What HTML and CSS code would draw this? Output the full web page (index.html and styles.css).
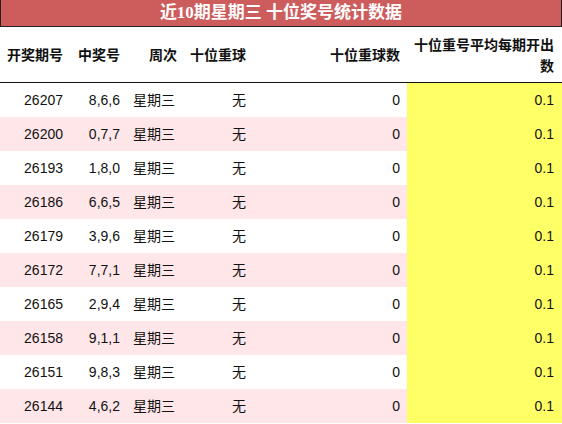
FILE: index.html
```html
<!DOCTYPE html>
<html lang="zh">
<head>
<meta charset="utf-8">
<link rel="stylesheet" href="styles.css">
</head>
<body>
<div class="title">近10期星期三 十位奖号统计数据</div>
<table class="stats">
  <colgroup>
    <col class="c1"><col class="c2"><col class="c3"><col class="c4"><col class="c5"><col class="c6">
  </colgroup>
  <thead>
    <tr>
      <th>开奖期号</th><th>中奖号</th><th>周次</th><th>十位重球</th><th>十位重球数</th><th>十位重号平均每期开出数</th>
    </tr>
  </thead>
  <tbody>
    <tr><td>26207</td><td>8,6,6</td><td>星期三</td><td>无</td><td>0</td><td class="avg">0.1</td></tr>
    <tr><td>26200</td><td>0,7,7</td><td>星期三</td><td>无</td><td>0</td><td class="avg">0.1</td></tr>
    <tr><td>26193</td><td>1,8,0</td><td>星期三</td><td>无</td><td>0</td><td class="avg">0.1</td></tr>
    <tr><td>26186</td><td>6,6,5</td><td>星期三</td><td>无</td><td>0</td><td class="avg">0.1</td></tr>
    <tr><td>26179</td><td>3,9,6</td><td>星期三</td><td>无</td><td>0</td><td class="avg">0.1</td></tr>
    <tr><td>26172</td><td>7,7,1</td><td>星期三</td><td>无</td><td>0</td><td class="avg">0.1</td></tr>
    <tr><td>26165</td><td>2,9,4</td><td>星期三</td><td>无</td><td>0</td><td class="avg">0.1</td></tr>
    <tr><td>26158</td><td>9,1,1</td><td>星期三</td><td>无</td><td>0</td><td class="avg">0.1</td></tr>
    <tr><td>26151</td><td>9,8,3</td><td>星期三</td><td>无</td><td>0</td><td class="avg">0.1</td></tr>
    <tr><td>26144</td><td>4,6,2</td><td>星期三</td><td>无</td><td>0</td><td class="avg">0.1</td></tr>
  </tbody>
</table>
</body>
</html>
```

FILE: styles.css
```css
html, body {
  margin: 0;
  padding: 0;
  background: #ffffff;
}

body {
  width: 562px;
  font-family: "Liberation Sans", "Noto Sans CJK SC", sans-serif;
  color: #111111;
}

.title {
  box-sizing: border-box;
  height: 27px;
  background: #cd5c5c;
  border-left: 1px solid #222222;
  border-right: 1px solid #222222;
  border-bottom: 1px solid #222222;
  color: #ffffff;
  font-family: "Liberation Serif", "Noto Sans CJK SC", serif;
  font-weight: bold;
  font-size: 17px;
  line-height: 26px;
  text-align: center;
}

.stats {
  width: 562px;
  table-layout: fixed;
  border-collapse: collapse;
  border-spacing: 0;
}

.c1 { width: 71px; }
.c2 { width: 57px; }
.c3 { width: 57px; }
.c4 { width: 69px; }
.c5 { width: 153px; }
.c6 { width: 155px; }

.stats th {
  height: 55px;
  padding: 0 8px 0 0;
  font-family: "Noto Sans CJK SC", sans-serif;
  font-weight: bold;
  font-size: 14px;
  line-height: 21px;
  text-align: right;
  vertical-align: middle;
  color: #111111;
  border-bottom: 1px solid #111111;
}

.stats th:nth-child(5) {
  padding-right: 7px;
}

.stats td {
  height: 34px;
  padding: 0 8px 0 0;
  font-size: 14px;
  line-height: 18px;
  text-align: right;
  vertical-align: middle;
  color: #111111;
}

.stats td:nth-child(3) {
  padding-right: 10px;
}

.stats td:nth-child(5) {
  padding-right: 7px;
}

.stats tbody tr:nth-child(even) td {
  background: #ffe6e9;
}

.stats tbody tr td.avg {
  background: #ffff66;
}
```
